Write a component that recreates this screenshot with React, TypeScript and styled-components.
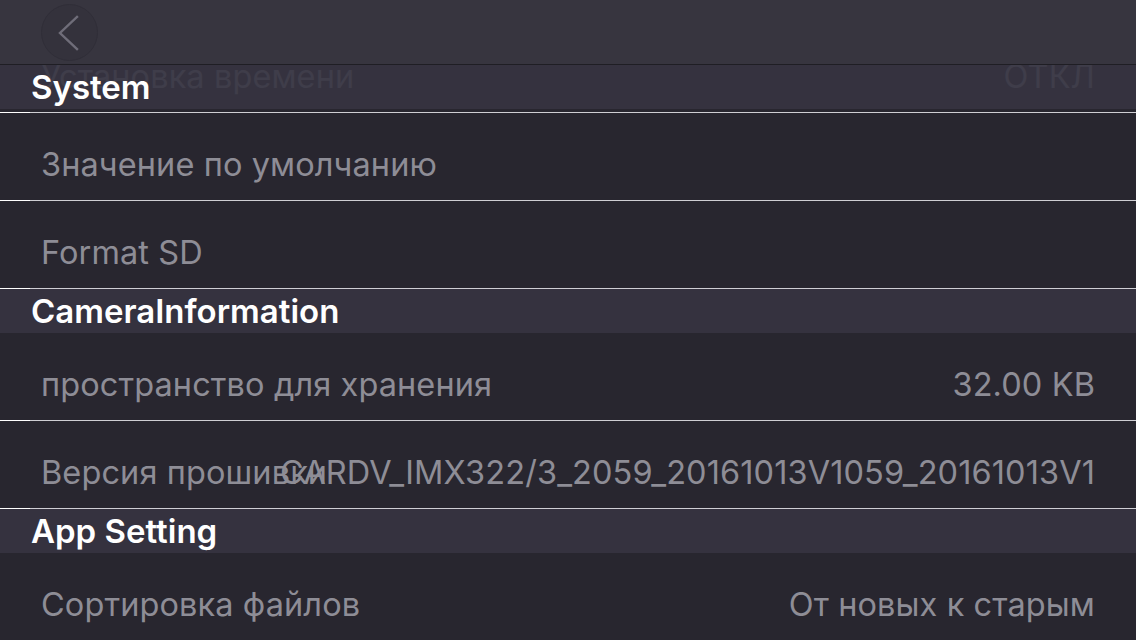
import React from "react";
import styled, { createGlobalStyle } from "styled-components";

const GlobalStyle = createGlobalStyle`
  html, body {
    margin: 0;
    padding: 0;
    background: #28262f;
    font-family: Inter, "Noto Sans", "Liberation Sans", sans-serif;
    -webkit-font-smoothing: antialiased;
  }
`;

const StyledScreen = styled.div`
  width: 1136px;
  height: 640px;
  display: flex;
  flex-direction: column;
  background-color: #28262f;
  overflow: hidden;
`;

const StyledNavBar = styled.div`
  flex: none;
  height: 64px;
  display: flex;
  align-items: center;
  padding-left: 41px;
  background-color: #37353f;
  border-bottom: 1px solid #1f1e24;
  position: relative;
  z-index: 2;
`;

const StyledBackButton = styled.button`
  width: 57px;
  height: 57px;
  margin-top: 1px;
  border-radius: 50%;
  border: 1px solid #302e38;
  background-color: #34323c;
  display: flex;
  align-items: center;
  justify-content: center;
  padding: 0;
  cursor: pointer;
`;

const StyledList = styled.div`
  flex: 1;
  position: relative;
  overflow: hidden;
`;

const StyledSectionHeader = styled.div<{ $floating?: boolean }>`
  height: 44px;
  display: flex;
  align-items: center;
  padding-left: 31px;
  background-color: rgba(54, 52, 65, 0.9);
  color: #ffffff;
  font-size: 33px;
  font-weight: 600;

  ${(p) =>
    p.$floating &&
    `
    position: absolute;
    top: 0;
    left: 0;
    right: 0;
  `}
`;

const StyledRow = styled.div<{ $hidden?: number }>`
  height: 87px;
  display: grid;
  align-items: center;
  padding: 16px 41px 0 41px;
  box-sizing: border-box;
  background-color: #28262f;
  color: #8e8d96;
  font-size: 32.5px;
  letter-spacing: 0.1px;
  margin-top: ${(p) => (p.$hidden ? `-${p.$hidden}px` : "0")};

  & > span {
    grid-area: 1 / 1;
    white-space: nowrap;
  }

  & > span:nth-child(2) {
    justify-self: end;
  }
`;

const StyledSeparator = styled.div`
  height: 1px;
  background: linear-gradient(to right, #ffffff 30px, #cfced4 30px);
`;

type Item = { label: string; value?: string };

const Row = ({ label, value, hidden }: Item & { hidden?: number }) => (
  <StyledRow $hidden={hidden}>
    <span>{label}</span>
    {value && <span>{value}</span>}
  </StyledRow>
);

const BackIcon = () => (
  <svg width="24" height="36" viewBox="0 0 24 36">
    <path
      d="M19 2 L2 18 L19 34"
      fill="none"
      stroke="#6f6d79"
      strokeWidth="2.4"
      strokeLinecap="square"
    />
  </svg>
);

export default function App() {
  return (
    <>
      <GlobalStyle />
      <StyledScreen>
        <StyledNavBar>
          <StyledBackButton aria-label="back">
            <BackIcon />
          </StyledBackButton>
        </StyledNavBar>
        <StyledList>
          <Row label="Установка времени" value="ОТКЛ" hidden={40} />
          <StyledSeparator />
          <StyledSectionHeader $floating>System</StyledSectionHeader>
          <Row label="Значение по умолчанию" />
          <StyledSeparator />
          <Row label="Format SD" />
          <StyledSeparator />
          <StyledSectionHeader>CameraInformation</StyledSectionHeader>
          <Row label="пространство для хранения" value="32.00 KB" />
          <StyledSeparator />
          <Row
            label="Версия прошивки"
            value="CARDV_IMX322/3_2059_20161013V1059_20161013V1"
          />
          <StyledSeparator />
          <StyledSectionHeader>App Setting</StyledSectionHeader>
          <Row label="Сортировка файлов" value="От новых к старым" />
        </StyledList>
      </StyledScreen>
    </>
  );
}
